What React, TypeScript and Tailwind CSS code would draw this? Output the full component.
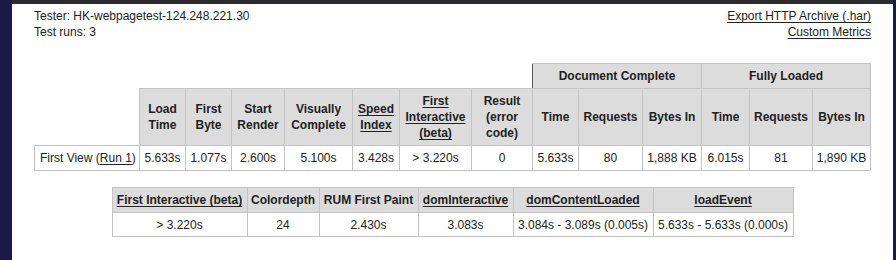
import React from "react";

const font = { fontFamily: '"Liberation Sans", Arial, Helvetica, sans-serif' };

const cellBase = "border border-[#c3c3c3] text-center align-middle p-0";
const headCell = `${cellBase} bg-[#dcdcdc] font-bold`;
const dataCell = `${cellBase} bg-white font-normal`;

function HLink({ children }: { children: React.ReactNode }) {
  return <a className="text-[#222] underline underline-offset-[2px]">{children}</a>;
}

const mainCols = [105, 46, 46, 53, 68, 47, 72, 61, 46, 64, 59, 48, 63, 58];

const mainHeads: React.ReactNode[] = [
  <>Load<br />Time</>,
  <>First<br />Byte</>,
  <>Start<br />Render</>,
  <>Visually<br />Complete</>,
  <HLink>Speed<br />Index</HLink>,
  <HLink>First<br />Interactive<br />(beta)</HLink>,
  <>Result<br />(error<br />code)</>,
  "Time",
  "Requests",
  "Bytes In",
  "Time",
  "Requests",
  "Bytes In",
];

const mainValues = [
  "5.633s",
  "1.077s",
  "2.600s",
  "5.100s",
  "3.428s",
  "> 3.220s",
  "0",
  "5.633s",
  "80",
  "1,888 KB",
  "6.015s",
  "81",
  "1,890 KB",
];

const extraCols = [135, 72, 99, 95, 140, 140];

const extraHeads: React.ReactNode[] = [
  <HLink>First Interactive (beta)</HLink>,
  "Colordepth",
  "RUM First Paint",
  <HLink>domInteractive</HLink>,
  <HLink>domContentLoaded</HLink>,
  <HLink>loadEvent</HLink>,
];

const extraValues = [
  "> 3.220s",
  "24",
  "2.430s",
  "3.083s",
  "3.084s - 3.089s (0.005s)",
  "5.633s - 5.633s (0.000s)",
];

export default function App() {
  return (
    <div
      className="flex h-[260px] w-[896px] overflow-hidden bg-[#1b1945] text-[12px] leading-[16px] text-[#222]"
      style={font}
    >
      <div className="w-[12px] shrink-0" />
      <div className="flex w-[881px] shrink-0 flex-col bg-white">
        <div className="h-[4px] bg-[#2b2b2e]" />
        <div className="flex flex-col px-[22px] pt-[4px]">
          {/* test info + export links */}
          <div className="flex justify-between">
            <div>
              <div>Tester: HK-webpagetest-124.248.221.30</div>
              <div>Test runs: 3</div>
            </div>
            <div className="flex flex-col items-end">
              <HLink>Export HTTP Archive (.har)</HLink>
              <HLink>Custom Metrics</HLink>
            </div>
          </div>

          {/* summary table */}
          <table className="mx-auto mt-[23px] table-fixed border-collapse w-[836px]">
            <colgroup>
              {mainCols.map((w, i) => (
                <col key={i} style={{ width: w }} />
              ))}
            </colgroup>
            <thead>
              <tr className="h-[25px]">
                <th colSpan={8} className="p-0" />
                <th colSpan={3} className={`${headCell} border-l-[#555]`}>
                  Document Complete
                </th>
                <th colSpan={3} className={headCell}>
                  Fully Loaded
                </th>
              </tr>
              <tr className="h-[57px] leading-[16px]">
                <th className="p-0" />
                {mainHeads.map((h, i) => (
                  <th key={i} className={headCell}>
                    {h}
                  </th>
                ))}
              </tr>
            </thead>
            <tbody>
              <tr className="h-[25px]">
                <td className={`${dataCell} text-left pl-[5px] whitespace-nowrap`}>
                  First View (<HLink>Run 1</HLink>)
                </td>
                {mainValues.map((v, i) => (
                  <td key={i} className={`${dataCell} whitespace-nowrap`}>
                    {v}
                  </td>
                ))}
              </tr>
            </tbody>
          </table>

          {/* custom metrics table */}
          <table className="mx-auto mt-[16px] table-fixed border-collapse w-[681px]">
            <colgroup>
              {extraCols.map((w, i) => (
                <col key={i} style={{ width: w }} />
              ))}
            </colgroup>
            <thead>
              <tr className="h-[25px]">
                {extraHeads.map((h, i) => (
                  <th key={i} className={`${headCell} whitespace-nowrap`}>
                    {h}
                  </th>
                ))}
              </tr>
            </thead>
            <tbody>
              <tr className="h-[24px]">
                {extraValues.map((v, i) => (
                  <td key={i} className={`${dataCell} whitespace-nowrap`}>
                    {v}
                  </td>
                ))}
              </tr>
            </tbody>
          </table>
        </div>
      </div>
      <div className="w-[3px] shrink-0" />
    </div>
  );
}
